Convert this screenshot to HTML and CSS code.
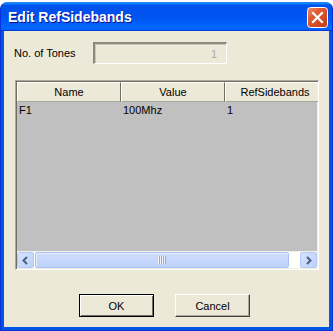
FILE: index.html
```html
<!DOCTYPE html>
<html>
<head>
    <meta charset="UTF-8">
    <link rel="stylesheet" href="styles.css">
</head>
<body>
<div class="window">
    <div class="titlebar">
        <span class="title">Edit RefSidebands</span>
        <svg class="close" width="21" height="21" viewBox="0 0 21 21">
            <defs>
                <linearGradient id="closeBg" x1="0" y1="0" x2="1" y2="1">
                    <stop offset="0" stop-color="#ec8f72"/>
                    <stop offset="0.35" stop-color="#e05a33"/>
                    <stop offset="1" stop-color="#c23a14"/>
                </linearGradient>
            </defs>
            <rect x="0.5" y="0.5" width="20" height="20" rx="3" fill="url(#closeBg)" stroke="#fff"/>
            <path d="M6 6 L15 15 M15 6 L6 15" stroke="#fff" stroke-width="2.2" stroke-linecap="square"/>
        </svg>
    </div>
    <div class="client">
        <div class="tones-row">
            <label class="tones-label">No. of Tones</label>
            <div class="tones-input">1</div>
        </div>

        <div class="listview">
            <div class="lv-header">
                <div class="lv-col col-name">Name</div>
                <div class="lv-col col-value">Value</div>
                <div class="lv-col col-ref">RefSidebands</div>
            </div>
            <div class="lv-body">
                <div class="lv-row">
                    <span class="col-name">F1</span>
                    <span class="col-value">100Mhz</span>
                    <span class="col-ref">1</span>
                </div>
            </div>
            <div class="hscroll">
                <div class="sb-btn">
                    <svg width="9" height="9" viewBox="0 0 9 9"><path d="M6 1 L2.5 4.5 L6 8" fill="none" stroke="#4d6185" stroke-width="2"/></svg>
                </div>
                <div class="sb-thumb">
                    <span class="grip"></span>
                </div>
                <div class="sb-track"></div>
                <div class="sb-btn">
                    <svg width="9" height="9" viewBox="0 0 9 9"><path d="M3 1 L6.5 4.5 L3 8" fill="none" stroke="#4d6185" stroke-width="2"/></svg>
                </div>
            </div>
        </div>

        <div class="buttons">
            <button class="btn btn-default">OK</button>
            <button class="btn">Cancel</button>
        </div>
    </div>
</div>
</body>
</html>
```
FILE: styles.css
```css
* {
    margin: 0;
    padding: 0;
    box-sizing: border-box;
}

body {
    width: 333px;
    height: 331px;
    overflow: hidden;
    background: #fff;
    font-family: 'Liberation Sans', Arial, sans-serif;
    font-size: 11px;
    color: #000;
}

.window {
    margin-top: 2px;
    height: 329px;
    display: flex;
    flex-direction: column;
    background: #0055e5;
    border: 1px solid #0831d9;
    border-top-color: #2a7cf5;
    border-radius: 7px 7px 0 0;
    overflow: hidden;
}

.titlebar {
    height: 28px;
    flex: none;
    display: flex;
    align-items: center;
    padding: 0 4px 0 7px;
    background: linear-gradient(180deg, #0997ff, #0053ee 8%, #0050ee 40%, #0066ff 88%, #0066ff 93%, #005bff 95%, #003dd7 96%, #003dd7);
}

.title {
    color: #fff;
    font-weight: bold;
    font-size: 14px;
    text-shadow: 1px 1px #0f1089;
}

.close {
    margin-left: auto;
    display: block;
}

.client {
    flex: 1;
    margin: 0 3px 3px;
    background: #ece9d8;
}

.tones-row {
    display: flex;
    align-items: center;
    padding: 11px 0 0 10px;
}

.tones-label {
    width: 79px;
}

.tones-input {
    width: 134px;
    height: 22px;
    border-style: solid;
    border-width: 2px 1px 1px 2px;
    border-color: #8c8a7e #fff #fff #8c8a7e;
    box-shadow: inset 1px 1px #cac6b6;
    color: #aca899;
    text-align: right;
    padding: 3px 9px 0 0;
    line-height: 14px;
}

.listview {
    margin: 16px 0 0 11px;
    width: 304px;
    height: 190px;
    display: flex;
    flex-direction: column;
    border: 1px solid;
    border-color: #aca899 #fff #fff #aca899;
    box-shadow: inset 1px 1px #716f64, inset -1px -1px #f1efe2;
    padding: 1px;
    overflow: hidden;
}

.lv-header {
    display: flex;
    height: 20px;
    flex: none;
    background: #ece9d8;
}

.lv-col {
    height: 20px;
    line-height: 18px;
    text-align: center;
    border-top: 1px solid #fff;
    border-left: 1px solid #fff;
    border-bottom: 1px solid #aca899;
    border-right: 1px solid #716f64;
    white-space: nowrap;
    flex: none;
}

.col-name { width: 104px; }
.col-value { width: 104px; }
.col-ref { width: 100px; }

.lv-body {
    flex: 1;
    background: #c0c0c0;
}

.lv-row {
    display: flex;
    height: 17px;
    line-height: 17px;
    white-space: nowrap;
}

.lv-row span {
    flex: none;
    padding-left: 2px;
}

.hscroll {
    height: 17px;
    flex: none;
    display: flex;
    background: #fefefb;
    border-top: 1px solid #f3f1ec;
}

.sb-btn {
    width: 17px;
    height: 16px;
    display: flex;
    align-items: center;
    justify-content: center;
    background: linear-gradient(135deg, #d6e3fe, #bcd0fb);
    border: 1px solid #b5c9f5;
    border-radius: 2px;
}

.sb-thumb {
    width: 254px;
    margin-left: 1px;
    height: 16px;
    display: flex;
    align-items: center;
    justify-content: center;
    background: linear-gradient(180deg, #cfdcfd, #bed2fc);
    border: 1px solid #a9c0f4;
    border-radius: 2px;
    box-shadow: inset 1px 1px #e4ebfe;
}

.grip {
    width: 8px;
    height: 8px;
    background: repeating-linear-gradient(90deg, #eef3fe 0 1px, #8faaea 1px 2px);
}

.sb-track {
    flex: 1;
}

.buttons {
    display: flex;
    gap: 21px;
    padding: 24px 0 0 75px;
}

.btn {
    width: 75px;
    height: 23px;
    font-family: 'Liberation Sans', Arial, sans-serif;
    font-size: 11px;
    color: #000;
    background: #ece9d8;
    border: 1px solid;
    border-color: #fff #404040 #404040 #fff;
    box-shadow: inset -1px -1px #aca899;
}

.btn-default {
    border: 1px solid #000;
    box-shadow: inset 1px 1px #fff, inset -1px -1px #716f64;
}
```
